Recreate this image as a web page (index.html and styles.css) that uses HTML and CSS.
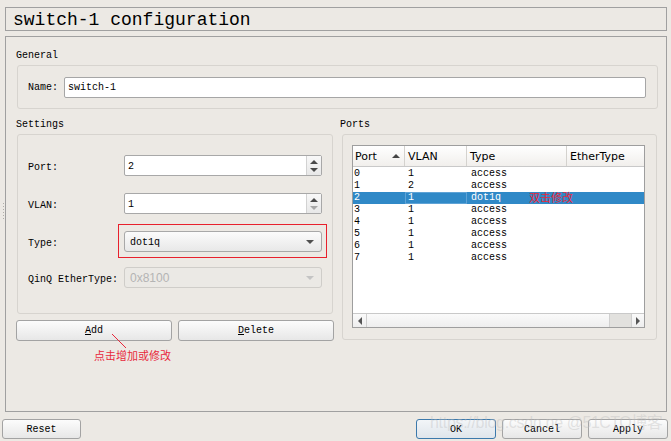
FILE: index.html
```html
<!DOCTYPE html>
<html>
<head>
<meta charset="utf-8">
<link rel="stylesheet" href="styles.css">
</head>
<body>
<div class="title-frame"><span class="title">switch-1 configuration</span></div>
<div class="main-frame">
  <div class="sec-label">General</div>
  <div class="group general">
    <span class="name-lbl">Name:</span>
    <div class="field">switch-1</div>
  </div>
  <div class="columns">
    <div class="col left">
      <div class="sec-label">Settings</div>
      <div class="group settings">
        <div class="row">
          <span class="lbl">Port:</span>
          <div class="spin"><span class="val">2</span><div class="spin-btns"><span class="up"></span><span class="down"></span></div></div>
        </div>
        <div class="row">
          <span class="lbl">VLAN:</span>
          <div class="spin"><span class="val">1</span><div class="spin-btns"><span class="up"></span><span class="down off"></span></div></div>
        </div>
        <div class="row">
          <span class="lbl">Type:</span>
          <div class="combo marked"><span class="ctext">dot1q</span><span class="arrow"></span></div>
        </div>
        <div class="row last">
          <span class="lbl">QinQ EtherType:</span>
          <div class="combo disabled"><span>0x8100</span><span class="arrow"></span></div>
        </div>
      </div>
      <div class="btn-row">
        <div class="btn wide"><u>A</u>dd</div>
        <div class="btn wide"><u>D</u>elete</div>
        <svg class="note-line" width="20" height="20" viewBox="0 0 20 20"><line x1="1" y1="1" x2="15" y2="15" stroke="#e8283c" stroke-width="1"/></svg>
        <span class="note add-note">点击增加或修改</span>
      </div>
    </div>
    <div class="col right">
      <div class="sec-label">Ports</div>
      <div class="group ports">
        <div class="table">
          <div class="thead">
            <div class="th c1">Port<span class="sort"></span></div>
            <div class="th c2">VLAN</div>
            <div class="th c3">Type</div>
            <div class="th c4">EtherType</div>
          </div>
          <div class="tbody">
            <div class="tr"><span class="td c1">0</span><span class="td c2">1</span><span class="td c3">access</span></div>
            <div class="tr"><span class="td c1">1</span><span class="td c2">2</span><span class="td c3">access</span></div>
            <div class="tr sel"><span class="td c1">2</span><span class="td c2 focus">1</span><span class="td c3">dot1q</span><span class="note row-note">双击修改</span></div>
            <div class="tr"><span class="td c1">3</span><span class="td c2">1</span><span class="td c3">access</span></div>
            <div class="tr"><span class="td c1">4</span><span class="td c2">1</span><span class="td c3">access</span></div>
            <div class="tr"><span class="td c1">5</span><span class="td c2">1</span><span class="td c3">access</span></div>
            <div class="tr"><span class="td c1">6</span><span class="td c2">1</span><span class="td c3">access</span></div>
            <div class="tr"><span class="td c1">7</span><span class="td c2">1</span><span class="td c3">access</span></div>
          </div>
          <div class="hscroll">
            <div class="sb-btn"><span class="la"></span></div>
            <div class="sb-track"><div class="sb-thumb"></div></div>
            <div class="sb-btn"><span class="ra"></span></div>
          </div>
        </div>
      </div>
    </div>
  </div>
</div>
<div class="bottom">
  <div class="btn reset">Reset</div>
  <div class="spacer"></div>
  <div class="btn ok">OK</div>
  <div class="btn">Cancel</div>
  <div class="btn">Apply</div>
</div>
<div class="grip"></div>
<div class="watermark"><span class="wm1">https://blog.csdn.ne</span><span class="wm2">@51CTO博客</span></div>
</body>
</html>
```
FILE: styles.css
```css
* { box-sizing: border-box; }
html, body { margin: 0; padding: 0; }
body {
  width: 671px;
  height: 441px;
  background: #ece9e4;
  font-family: "Liberation Mono", "DejaVu Sans Mono", monospace;
  font-size: 10px;
  color: #000;
  position: relative;
  overflow: hidden;
}
.title-frame {
  margin: 7px 4px 0 5px;
  height: 24px;
  border: 1px solid #a0a0a0;
  padding: 3px 0 0 7px;
}
.title {
  display: block;
  font-size: 18px;
  line-height: 19px;
}
.main-frame {
  margin: 5px 4px 0 5px;
  height: 376px;
  border: 1px solid #a0a0a0;
  padding: 11px 8px 0 10px;
}
.sec-label {
  height: 12px;
  line-height: 15px;
  margin-bottom: 5px;
}
.group {
  border: 1px solid #d7d4cf;
  border-radius: 3px;
}
.general {
  margin-left: 1px;
  height: 44px;
  display: flex;
  align-items: center;
  padding: 0 11px 0 10px;
}
.name-lbl { width: 36px; padding-top: 1px; }
.field {
  flex: 1;
  height: 21px;
  background: #fff;
  border: 1px solid #a6a6a6;
  border-radius: 2px;
  padding: 1px 0 0 3px;
  line-height: 18px;
}
.columns {
  display: flex;
  gap: 6px;
  margin-top: 8px;
}
.col.left { width: 318px; }
.col.right { flex: 1; }
.settings {
  margin: 0 1px;
  height: 180px;
  padding: 20px 10px 0 10px;
}
.row {
  display: flex;
  align-items: center;
  height: 21px;
  margin-bottom: 17px;
}
.row:nth-child(3) { margin-bottom: 15px; }
.lbl { width: 96px; padding-top: 3px; }
.spin {
  width: 198px;
  height: 21px;
  display: flex;
  background: #fff;
  border: 1px solid #a8a8a8;
  border-radius: 2px;
}
.val {
  flex: 1;
  padding: 2px 0 0 3px;
  line-height: 17px;
}
.spin-btns {
  width: 15px;
  border-left: 1px solid #d2d2d2;
  background: linear-gradient(#f8f8f8, #e8e8e8);
  display: flex;
  flex-direction: column;
  align-items: center;
  justify-content: center;
  gap: 4px;
}
.up {
  width: 0; height: 0;
  border-left: 4px solid transparent;
  border-right: 4px solid transparent;
  border-bottom: 4px solid #4a4a4a;
}
.down {
  width: 0; height: 0;
  border-left: 4px solid transparent;
  border-right: 4px solid transparent;
  border-top: 4px solid #4a4a4a;
}
.down.off { border-top-color: #a8a8a8; }
.combo {
  width: 198px;
  height: 21px;
  display: flex;
  align-items: center;
  justify-content: space-between;
  padding: 0 7px 0 5px;
  border: 1px solid #a8a8a8;
  border-radius: 3px;
  background: linear-gradient(#fbfbfb, #e8e8e8);
  position: relative;
}
.ctext { padding-top: 2px; }
.arrow {
  width: 0; height: 0;
  border-left: 4px solid transparent;
  border-right: 4px solid transparent;
  border-top: 4px solid #505050;
}
.combo.marked::after {
  content: "";
  position: absolute;
  left: -7px;
  top: -8px;
  right: -6px;
  bottom: -7px;
  border: 1px solid #e8202c;
}
.combo.disabled {
  border-color: #cfcdc9;
  background: #ebe9e5;
  color: #b4b4b4;
  font-family: "Liberation Sans", sans-serif;
  font-size: 12px;
}
.combo.disabled .arrow { border-top-color: #c4c4c4; }
.btn-row {
  display: flex;
  gap: 6px;
  margin-top: 6px;
  position: relative;
}
.btn {
  height: 20px;
  border: 1px solid #a3a3a3;
  border-radius: 3px;
  background: linear-gradient(#fcfcfc, #e7e7e7);
  display: flex;
  align-items: center;
  justify-content: center;
  line-height: 16px;
  padding-top: 2px;
}
.btn.wide { flex: 1; height: 21px; padding-top: 1px; }
.note {
  color: #e8283c;
  font-family: "Noto Sans CJK SC", sans-serif;
  font-size: 11px;
  line-height: 14px;
}
.note-line {
  position: absolute;
  left: 95px;
  top: 13px;
}
.add-note {
  position: absolute;
  left: 78px;
  top: 28px;
}
.ports {
  margin-left: 2px;
  width: 315px;
  height: 206px;
  padding: 10px 11px 11px 9px;
}
.table {
  height: 183px;
  border: 1px solid #9e9e9e;
  background: #fff;
  display: flex;
  flex-direction: column;
}
.thead {
  display: flex;
  height: 21px;
  border-bottom: 1px solid #c9c9c9;
  background: linear-gradient(#ffffff, #f1efec);
  font-family: "DejaVu Sans", sans-serif;
  font-size: 11px;
}
.th {
  line-height: 21px;
  border-right: 1px solid #d4d2ce;
  padding-left: 3px;
  position: relative;
}
.c1 { width: 52px; }
.c2 { width: 62px; }
.c3 { width: 100px; }
.c4 { flex: 1; border-right: none; }
.th.c1 { padding-left: 2px; }
.sort {
  position: absolute;
  left: 39px;
  top: 8px;
  width: 0; height: 0;
  border-left: 4px solid transparent;
  border-right: 4px solid transparent;
  border-bottom: 4px solid #444;
}
.tbody {
  flex: 1;
  padding-top: 1px;
}
.tr {
  display: flex;
  height: 12px;
  line-height: 12px;
  position: relative;
}
.td { display: block; }
.td.c1 { padding-left: 1px; }
.td.c2 { padding-left: 3px; }
.td.c3 { padding-left: 4px; }
.tr.sel { background: #3089c7; color: #fff; }
.td.focus { box-shadow: inset 0 0 0 1px #5fa3d6; }
.row-note {
  position: absolute;
  left: 176px;
  top: -2px;
}
.hscroll {
  height: 14px;
  display: flex;
  border-top: 1px solid #c9c9c9;
  background: linear-gradient(#fafafa, #eeeeee);
}
.sb-btn {
  width: 13px;
  display: flex;
  align-items: center;
  justify-content: center;
}
.sb-btn:first-child { border-right: 1px solid #cfcfcf; width: 14px; }
.sb-btn:last-child { border-left: 1px solid #cfcfcf; }
.la {
  width: 0; height: 0;
  border-top: 4px solid transparent;
  border-bottom: 4px solid transparent;
  border-right: 4px solid #555;
}
.ra {
  width: 0; height: 0;
  border-top: 4px solid transparent;
  border-bottom: 4px solid transparent;
  border-left: 4px solid #555;
}
.sb-track {
  flex: 1;
  display: flex;
  justify-content: flex-end;
}
.sb-thumb {
  width: 22px;
  background: #e2e1de;
  border-left: 1px solid #d0d0d0;
}
.bottom {
  display: flex;
  gap: 6px;
  margin: 7px 3px 0 2px;
}
.spacer { flex: 1; }
.bottom .btn { width: 80px; }
.bottom .btn.reset { width: 79px; }
.btn.ok {
  border-color: #3c79ab;
  background: linear-gradient(#f2f5f8, #dfe5eb);
}
.grip {
  position: absolute;
  left: 3px;
  top: 203px;
  width: 1px;
  height: 16px;
  background: repeating-linear-gradient(#b0ada8 0 1px, transparent 1px 3px);
}
.watermark {
  position: absolute;
  left: 430px;
  top: 414px;
  font-family: "Liberation Sans", "Noto Sans CJK SC", sans-serif;
  font-size: 16px;
  line-height: 18px;
  color: rgba(190, 190, 190, 0.4);
  white-space: nowrap;
  pointer-events: none;
  display: flex;
  gap: 4px;
}
.wm1 { letter-spacing: -0.3px; }
.wm2 { letter-spacing: -0.5px; }
```
